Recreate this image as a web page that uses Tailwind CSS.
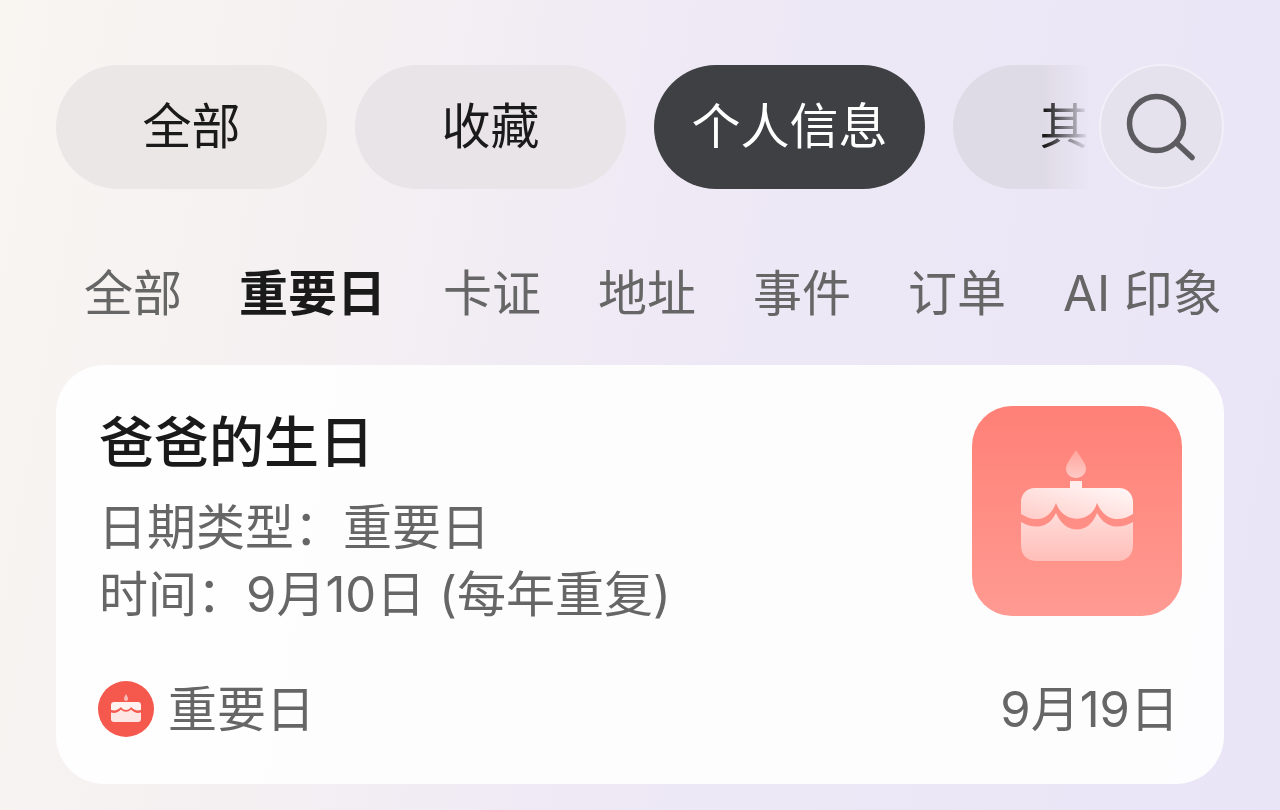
<!DOCTYPE html>
<html lang="zh-CN">
  <head>
    <meta charset="UTF-8" />
    <title>个人信息</title>
    <script src="https://cdn.jsdelivr.net/npm/@tailwindcss/browser@4"></script>
  </head>
  <body class="w-[1280px] h-[810px] overflow-hidden bg-[linear-gradient(100deg,#f9f5f1_0%,#f4f0f2_27%,#eee9f5_50%,#e9e5f7_100%)] font-['Inter','Noto_Sans_CJK_SC',sans-serif] text-[49px] leading-none">
    <!-- Top filters -->
    <div class="relative pt-[65px] pl-[56px]">
      <div class="w-[1034px] overflow-hidden flex gap-[28px] [mask-image:linear-gradient(to_right,#000_calc(100%-45px),transparent)]">
        <div class="w-[271px] h-[124px] pb-[2px] shrink-0 rounded-full bg-[#ebe7e6] text-[#1a1a1a] flex items-center justify-center">全部</div>
        <div class="w-[271px] h-[124px] pb-[2px] shrink-0 rounded-full bg-[#e8e4e8] text-[#1a1a1a] flex items-center justify-center">收藏</div>
        <div class="w-[271px] h-[124px] pb-[2px] shrink-0 rounded-full bg-[#3f4043] text-white flex items-center justify-center">个人信息</div>
        <div class="w-[271px] h-[124px] pb-[2px] shrink-0 rounded-full bg-[#dfdbe6] text-[#1a1a1a] flex items-center justify-center">其他</div>
      </div>
      <div class="absolute left-[1099px] top-[64px] w-[125px] h-[125px] rounded-full bg-[#e5e2ed] border-2 border-[#f1eff7] flex items-center justify-center">
        <svg width="72" height="72" viewBox="0 0 72 72" fill="none" stroke="#5c5b60" stroke-width="5.5" stroke-linecap="round">
          <circle cx="30.5" cy="32.5" r="27" />
          <path d="M51 52.5 L66 66.5" />
        </svg>
      </div>
    </div>

    <!-- Sub tabs -->
    <div class="mt-[80px] pl-[84px] flex gap-[57px] text-[#666] h-[48px] items-center whitespace-nowrap">
      <span>全部</span>
      <span class="font-bold text-[#1a1a1a]">重要日</span>
      <span>卡证</span>
      <span>地址</span>
      <span>事件</span>
      <span>订单</span>
      <span>AI 印象</span>
    </div>

    <!-- Card -->
    <div class="mt-[48px] mx-[56px] h-[419px] rounded-[48px] bg-white/90 px-[44px] pt-[44px] flex flex-col">
      <div class="flex justify-between">
        <div class="-ml-[1px]">
          <div class="text-[55px] font-medium text-[#1a1a1a] h-[66px] flex items-center">爸爸的生日</div>
          <div class="mt-[28px] text-[#666] h-[48px] -ml-[1px] flex items-center">日期类型：重要日</div>
          <div class="mt-[19px] text-[#666] h-[48px] flex items-center">时间：9月10日 (每年重复)</div>
        </div>
        <div class="w-[210px] h-[210px] -mt-[3px] rounded-[40px] -mr-[2px] bg-gradient-to-b from-[#ff8076] to-[#ff9a92] flex items-center justify-center">
          <svg width="112" height="112" viewBox="0 0 112 112" class="-mt-[10px]">
            <defs>
              <linearGradient id="icing" x1="0" y1="1" x2="1" y2="0">
                <stop offset="0" stop-color="#fff" stop-opacity="0.55" />
                <stop offset="1" stop-color="#fff" stop-opacity="0.95" />
              </linearGradient>
              <linearGradient id="base" x1="0" y1="0" x2="0" y2="1">
                <stop offset="0" stop-color="#fff" stop-opacity="0.7" />
                <stop offset="1" stop-color="#fff" stop-opacity="0.4" />
              </linearGradient>
              <linearGradient id="flame" x1="0" y1="0" x2="0" y2="1">
                <stop offset="0" stop-color="#fff" stop-opacity="0.25" />
                <stop offset="1" stop-color="#fff" stop-opacity="0.55" />
              </linearGradient>
            </defs>
            <path d="M55 0 C59 7 65 13 65 19 C65 24 60 28 55 28 C50 28 45 24 45 19 C45 13 51 7 55 0 Z" fill="url(#flame)" />
            <rect x="49" y="31" width="12" height="7" fill="#fff" fill-opacity="0.85" />
            <path d="M0 52 C0 44 6 38 14 38 H98 C106 38 112 44 112 52 V64 C100 72 84 72 76 53 C70 74 42 74 35 53 C28 72 12 72 0 64 Z" fill="url(#icing)" />
            <path d="M0 72 C14 80 28 78 35 63 C44 85 68 85 76 63 C84 78 98 80 112 72 V95 C112 105 106 111 96 111 H16 C6 111 0 105 0 95 Z" fill="url(#base)" />
          </svg>
        </div>
      </div>
      <div class="mt-[63px] flex justify-between items-center text-[#666] h-[56px] pr-[1px] -ml-[2px]">
        <div class="flex items-center gap-[14px]">
          <div class="w-[56px] h-[56px] rounded-full bg-[#f5584d] flex items-center justify-center">
            <svg width="32" height="32" viewBox="0 0 32 32">
              <path d="M16 1 C17.5 3.5 18 4.5 18 6 C18 7 17 8 16 8 C15 8 14 7 14 6 C14 4.5 14.5 3.5 16 1 Z" fill="#fff" fill-opacity="0.6" />
              <path d="M1 17 V12 C1 10 2 9 4 9 H28 C30 9 31 10 31 12 V17 C27 18 24 17 21 14 C19 18 13 18 11 14 C8 17 5 18 1 17 Z" fill="#fff" fill-opacity="0.92" />
              <path d="M1 19.5 C5 20.5 8 19.5 11 16.5 C14 19.5 18 19.5 21 16.5 C24 19.5 27 20.5 31 19.5 V26 C31 28 30 29 28 29 H4 C2 29 1 28 1 26 Z" fill="#fff" fill-opacity="0.85" />
            </svg>
          </div>
          <span>重要日</span>
        </div>
        <span>9月19日</span>
      </div>
    </div>
  </body>
</html>
